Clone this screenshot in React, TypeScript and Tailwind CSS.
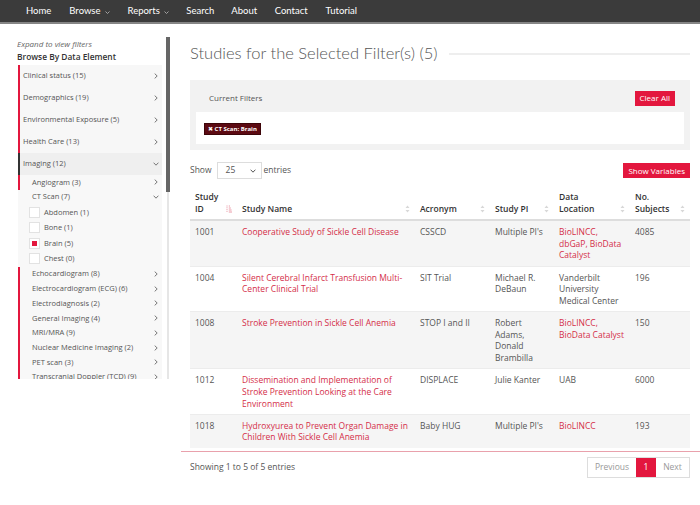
import React from "react";

const RED = "#e3173e";
const LINK = "#d42e49";

function ChevRight() {
  return (
    <svg width="4" height="6" viewBox="0 0 4 6" fill="none">
      <path d="M0.7 0.6 L3.2 3 L0.7 5.4" stroke="#666" strokeWidth="0.9" />
    </svg>
  );
}
function ChevDown() {
  return (
    <svg width="6" height="4" viewBox="0 0 6 4" fill="none">
      <path d="M0.6 0.7 L3 3.2 L5.4 0.7" stroke="#666" strokeWidth="0.9" />
    </svg>
  );
}
function NavChev() {
  return (
    <svg width="5" height="3" viewBox="0 0 5 3" fill="none" className="ml-[4px] mt-[2px]">
      <path d="M0.5 0.5 L2.5 2.5 L4.5 0.5" stroke="#bbb" strokeWidth="0.8" />
    </svg>
  );
}
function SortBoth() {
  return (
    <svg width="5" height="8" viewBox="0 0 5 8" className="shrink-0 mb-[2px]">
      <path d="M2.5 0.5 L4.5 3 H0.5Z M2.5 7.5 L0.5 5 H4.5Z" fill="#d8d8d8" />
    </svg>
  );
}
function SortAsc() {
  return (
    <svg width="6" height="8" viewBox="0 0 6 8" className="shrink-0 mb-[2px]">
      <path d="M1 0.5 V7.5" stroke="#e8909e" strokeWidth="0.9" strokeDasharray="1 0.8" />
      <path d="M2.8 1 H4 M2.8 3 H4.8 M2.8 5 H5.6 M2.8 7 H6" stroke="#e8909e" strokeWidth="0.9" />
    </svg>
  );
}

const topItems = [
  "Clinical status (15)",
  "Demographics (19)",
  "Environmental Exposure (5)",
  "Health Care (13)",
];
const afterCT = [
  "Echocardiogram (8)",
  "Electrocardiogram (ECG) (6)",
  "Electrodiagnosis (2)",
  "General Imaging (4)",
  "MRI/MRA (9)",
  "Nuclear Medicine Imaging (2)",
  "PET scan (3)",
  "Transcranial Doppler (TCD) (9)",
];
const ctChildren: [string, boolean][] = [
  ["Abdomen (1)", false],
  ["Bone (1)", false],
  ["Brain (5)", true],
  ["Chest (0)", false],
];

type Row = {
  id: string;
  name: string;
  acr: string;
  pi: string;
  loc: string;
  locLink: boolean;
  n: string;
};
const rows: Row[] = [
  { id: "1001", name: "Cooperative Study of Sickle Cell Disease", acr: "CSSCD", pi: "Multiple PI's", loc: "BioLINCC, dbGaP, BioData Catalyst", locLink: true, n: "4085" },
  { id: "1004", name: "Silent Cerebral Infarct Transfusion Multi-Center Clinical Trial", acr: "SIT Trial", pi: "Michael R. DeBaun", loc: "Vanderbilt University Medical Center", locLink: false, n: "196" },
  { id: "1008", name: "Stroke Prevention in Sickle Cell Anemia", acr: "STOP I and II", pi: "Robert Adams, Donald Brambilla", loc: "BioLINCC, BioData Catalyst", locLink: true, n: "150" },
  { id: "1012", name: "Dissemination and Implementation of Stroke Prevention Looking at the Care Environment", acr: "DISPLACE", pi: "Julie Kanter", loc: "UAB", locLink: false, n: "6000" },
  { id: "1018", name: "Hydroxyurea to Prevent Organ Damage in Children With Sickle Cell Anemia", acr: "Baby HUG", pi: "Multiple PI's", loc: "BioLINCC", locLink: true, n: "193" },
];

function Th({ label, w, sorted }: { label: string; w: string; sorted?: boolean }) {
  return (
    <th className={`${w} align-bottom pl-[5px] pr-[5px] pt-[6px] pb-[4px] border-b-2 border-[#dddddd] text-left font-semibold text-[#333]`}>
      <div className="flex items-end justify-between">
        <span className="pr-[8px]">{label}</span>
        {sorted ? <SortAsc /> : <SortBoth />}
      </div>
    </th>
  );
}

export default function App() {
  return (
    <div className="w-[700px] h-[505px] bg-white overflow-hidden text-[#555]" style={{ fontFamily: "'Open Sans', 'DejaVu Sans', sans-serif" }}>
      {/* Navbar */}
      <nav className="h-[24px] bg-[#3b3b3b] border-b-2 border-[#858585] flex items-center pl-[17px] text-white text-[9.5px]" style={{ fontFamily: "Lato, 'Liberation Sans', sans-serif" }}>
        <span className="px-[9px]">Home</span>
        <span className="px-[9px] flex items-center">Browse<NavChev /></span>
        <span className="px-[9px] flex items-center">Reports<NavChev /></span>
        <span className="px-[8.5px]">Search</span>
        <span className="px-[8.5px]">About</span>
        <span className="px-[9px]">Contact</span>
        <span className="px-[9px]">Tutorial</span>
      </nav>

      <div className="flex">
        {/* Sidebar */}
        <aside className="w-[181px] shrink-0 pl-[17px] mt-[13px] h-[342px] flex overflow-hidden">
          <div className="w-[145px] shrink-0 overflow-hidden">
            <div className="italic text-[8px] leading-[12px] text-[#666] mt-[1px]">Expand to view filters</div>
            <div className="font-semibold text-[8.4px] leading-[12px] text-[#333] mt-[1px]">Browse By Data Element</div>
            <div className="mt-[2px] ml-[1px] text-[7.5px] text-[#555]">
              {topItems.map((t) => (
                <div key={t} className="h-[22px] flex items-center justify-between bg-[#f7f7f7] border-l-2 border-[#e3173e] pl-[3px] pr-[4px]">
                  <span>{t}</span>
                  <ChevRight />
                </div>
              ))}
              <div className="h-[22px] flex items-center justify-between bg-[#efefef] border-l-2 border-[#333] pl-[3px] pr-[3px]">
                <span>Imaging (12)</span>
                <ChevDown />
              </div>
              <div className="bg-[#f8f8f8]">
                <div className="h-[14.7px] flex items-center justify-between border-l-2 border-[#e3173e] pl-[12px] pr-[4px]">
                  <span>Angiogram (3)</span>
                  <ChevRight />
                </div>
                <div className="border-l-2 border-transparent">
                  <div className="h-[14.7px] flex items-center justify-between pl-[12px] pr-[3px]">
                    <span>CT Scan (7)</span>
                    <ChevDown />
                  </div>
                  {ctChildren.map(([t, on]) => (
                    <div key={t} className="h-[15.6px] flex items-center pl-[9px] gap-[4px]">
                      <span className="w-[11px] h-[11px] bg-white border border-[#e2e2e2] flex items-center justify-center">
                        {on && <span className="w-[5px] h-[5px] bg-[#e3173e]" />}
                      </span>
                      <span>{t}</span>
                    </div>
                  ))}
                </div>
                {afterCT.map((t) => (
                  <div key={t} className="h-[14.7px] flex items-center justify-between border-l-2 border-[#e3173e] pl-[12px] pr-[4px]">
                    <span>{t}</span>
                    <ChevRight />
                  </div>
                ))}
              </div>
            </div>
          </div>
          <div className="ml-[4px] w-[4px] flex flex-col">
            <div className="h-[155px] bg-[#666]" />
            <div className="flex-1 w-[2px] ml-[1px] bg-[#e6e6e6]" />
          </div>
        </aside>

        {/* Main */}
        <main className="flex-1 pl-[9px] pr-[10px] pt-[17px]">
          <div className="flex items-center h-[24px]">
            <h1 className="text-[16.5px] font-light text-[#555] leading-[24px] whitespace-nowrap" style={{ fontFamily: "Lato, 'Liberation Sans', sans-serif" }}>
              Studies for the Selected Filter(s) (5)
            </h1>
            <div className="flex-1 h-[2px] bg-[#eeeeee] ml-[11px] mt-[2px]" />
          </div>

          <section className="mt-[15px] bg-[#f2f2f2] pb-[6px]">
            <div className="h-[32px] pt-[4px] flex items-center justify-between pl-[19px] pr-[15px]">
              <span className="text-[8px] text-[#555]">Current Filters</span>
              <button className="h-[15px] px-[5px] text-[8px] text-white" style={{ backgroundColor: RED }}>Clear All</button>
            </div>
            <div className="mx-[6px] h-[32px] bg-white pt-[11px] pl-[8px] flex items-start">
              <span className="flex items-center h-[12px] px-[3px] bg-[#5c0a12] border border-[#3d0509] text-white font-bold text-[6px] leading-none">
                ✖ CT Scan: Brain
              </span>
            </div>
          </section>

          <div className="mt-[12px] flex items-center justify-between text-[8.5px]">
            <div className="flex items-center">
              <span>Show</span>
              <div className="ml-[5px] w-[45px] h-[17px] border border-[#dddddd] flex items-center justify-between pl-[8px] pr-[5px]">
                <span>25</span>
                <svg width="6" height="4" viewBox="0 0 6 4" fill="none"><path d="M0.6 0.7 L3 3.2 L5.4 0.7" stroke="#555" strokeWidth="1" /></svg>
              </div>
              <span className="ml-[2px]">entries</span>
            </div>
            <button className="h-[15px] px-[5px] text-[8px] text-white" style={{ backgroundColor: RED }}>Show Variables</button>
          </div>

          <table className="mt-[6px] w-[500px] table-fixed border-separate border-spacing-0 text-[8.5px] leading-[12px]">
            <thead>
              <tr>
                <Th label="Study ID" w="w-[47px]" sorted />
                <Th label="Study Name" w="w-[178px]" />
                <Th label="Acronym" w="w-[75px]" />
                <Th label="Study PI" w="w-[64px]" />
                <Th label="Data Location" w="w-[76px]" />
                <Th label="No. Subjects" w="w-[60px]" />
              </tr>
            </thead>
            <tbody className="leading-[11.7px]">
              {rows.map((r, i) => {
                const td = `align-top px-[5px] pt-[5px] pb-[4.4px] ${i > 0 ? "border-t border-[#ececec]" : ""}`;
                return (
                  <tr key={r.id} className={i % 2 === 0 ? "bg-[#f5f5f5]" : "bg-white"}>
                    <td className={td}>{r.id}</td>
                    <td className={td} style={{ color: LINK }}>{r.name}</td>
                    <td className={td}>{r.acr}</td>
                    <td className={td}>{r.pi}</td>
                    <td className={td} style={r.locLink ? { color: LINK } : undefined}>{r.loc}</td>
                    <td className={td}>{r.n}</td>
                  </tr>
                );
              })}
            </tbody>
          </table>

          <div className="mt-[3px] -ml-[9px] -mr-[10px] h-px bg-[#e9a1ac]" />

          <div className="mt-[5px] flex items-center justify-between text-[8.5px]">
            <span>Showing 1 to 5 of 5 entries</span>
            <div className="flex h-[21px] border border-[#dddddd]">
              <span className="w-[48px] flex items-center justify-center text-[#999]">Previous</span>
              <span className="w-[20px] flex items-center justify-center text-white" style={{ backgroundColor: RED }}>1</span>
              <span className="w-[33px] flex items-center justify-center text-[#999]">Next</span>
            </div>
          </div>
        </main>
      </div>
    </div>
  );
}
